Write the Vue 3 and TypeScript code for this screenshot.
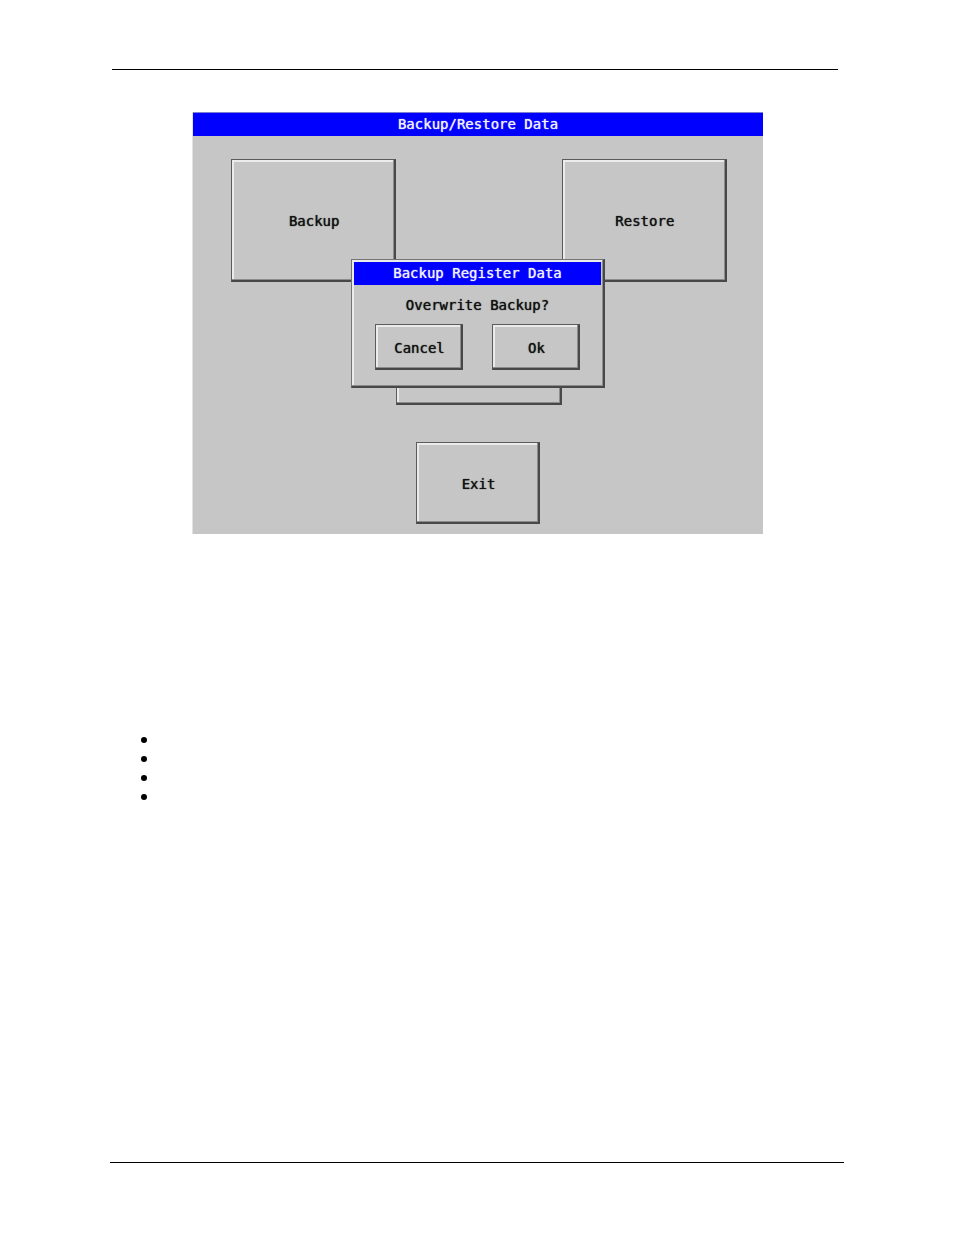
<script setup lang="ts">
interface Action {
  id: string
  label: string
}

const topActions: Action[] = [
  { id: 'backup', label: 'Backup' },
  { id: 'restore', label: 'Restore' },
]
const dialogActions: Action[] = [
  { id: 'cancel', label: 'Cancel' },
  { id: 'ok', label: 'Ok' },
]
const notes: string[] = ['', '', '', '']
</script>

<template>
  <div class="page">
    <hr class="rule rule-top" />
    <main>
      <section class="screen" aria-labelledby="screen-title">
        <h1 id="screen-title" class="bar">Backup/Restore Data</h1>
        <div class="grid">
          <button v-for="a in topActions" :key="a.id" type="button" class="key" :class="a.id">
            {{ a.label }}
          </button>
          <button type="button" class="key middle" aria-label="More" tabindex="-1"></button>
        </div>
        <button type="button" class="key exit">Exit</button>

        <div class="dialog" role="dialog" aria-labelledby="dialog-title">
          <h2 id="dialog-title" class="bar">Backup Register Data</h2>
          <p class="question">Overwrite Backup?</p>
          <div class="choices">
            <button v-for="a in dialogActions" :key="a.id" type="button" class="key choice">
              {{ a.label }}
            </button>
          </div>
        </div>
      </section>

      <ul class="notes">
        <li v-for="(note, i) in notes" :key="i">{{ note }}</li>
      </ul>
    </main>
    <hr class="rule rule-bottom" />
  </div>
</template>

<style>
body {
  margin: 0;
  background: #fff;
}
</style>

<style scoped>
.page {
  box-sizing: border-box;
  min-height: 100vh;
  padding: 69px 110px 72px;
  display: flex;
  flex-direction: column;
  font-family: "DejaVu Sans Mono", "Liberation Mono", monospace;
  font-size: 14px;
  line-height: 20px;
  color: #111;
  text-shadow: 0 0 1px currentColor;
}
.rule {
  width: auto;
  height: 1px;
  margin: 0;
  border: 0;
  background: #000;
}
.rule-top {
  margin: 0 6px 0 2px;
}
.rule-bottom {
  margin-top: auto;
}
.screen {
  position: relative;
  box-sizing: border-box;
  margin: 42px 81px 0 83px;
  padding-bottom: 10px;
  border-top: 1px solid #8080d0;
  background: #c6c6c6;
  box-shadow: -1px 0 #e2e2e2;
}
.bar {
  margin: 0;
  height: 23px;
  line-height: 23px;
  background: #00f;
  color: #f0f0ff;
  font-size: 14px;
  font-weight: 400;
  text-align: center;
}
.grid {
  display: grid;
  grid-template-columns: repeat(3, 1fr);
  grid-auto-rows: 123px;
  padding: 23px 36px 0 38px;
}
.key {
  box-sizing: border-box;
  padding: 2px 0 0 2px;
  border: 1px solid #5c5c5c;
  border-right: 2px solid #484848;
  border-bottom: 2px solid #484848;
  border-radius: 0;
  background: #c6c6c6;
  box-shadow: inset -1px -1px #8c8c8c, inset 2px 2px #ebebeb;
  color: #111;
  font: inherit;
  text-shadow: inherit;
}
.restore {
  grid-column: 3;
}
.middle {
  grid-column: 2;
  grid-row: 2;
}
.exit {
  display: block;
  width: 124px;
  height: 82px;
  margin: 37px auto 0;
}
.dialog {
  position: absolute;
  top: 146px;
  left: 50%;
  transform: translateX(-50%);
  box-sizing: border-box;
  width: 254px;
  padding: 2px 2px 16px;
  border: 1px solid #747474;
  border-right: 2px solid #484848;
  border-bottom: 2px solid #484848;
  background: #c6c6c6;
  box-shadow: inset -1px -1px #8c8c8c, inset 2px 2px #ebebeb;
}
.question {
  margin: 10px 0 9px;
  text-align: center;
}
.choices {
  display: flex;
  justify-content: center;
  gap: 29px;
}
.choice {
  width: 88px;
  height: 46px;
}
.notes {
  list-style: none;
  margin: 196px 0 0;
  padding: 0 0 0 31px;
}
.notes li {
  display: flex;
  align-items: center;
  height: 19px;
}
.notes li::before {
  content: "";
  width: 6px;
  height: 6px;
  border-radius: 50%;
  background: #000;
}
</style>
